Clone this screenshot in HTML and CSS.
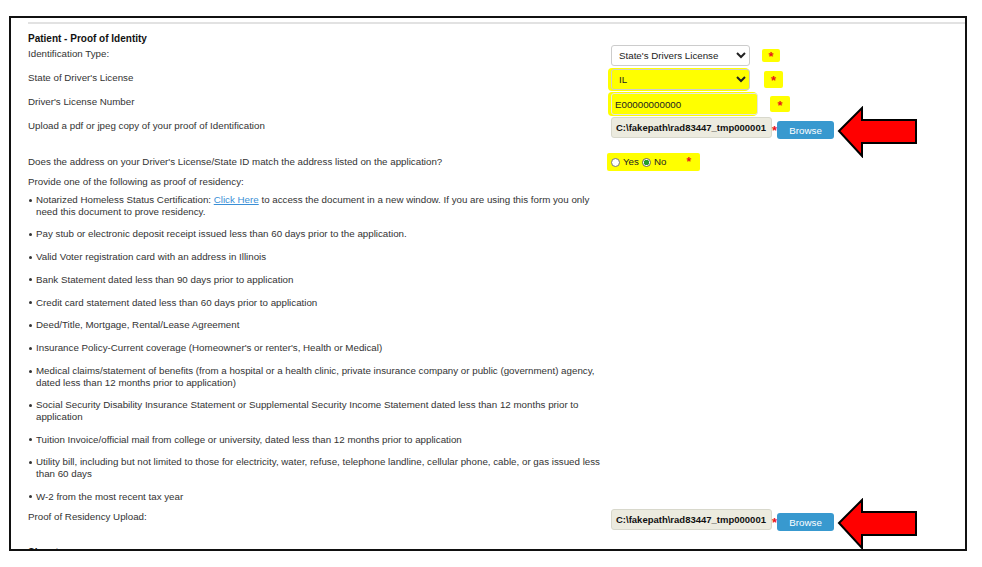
FILE: index.html
```html
<!DOCTYPE html>
<html lang="en">
<head>
    <meta charset="UTF-8">
    <meta name="viewport" content="width=device-width, initial-scale=1.0">
    <title>Patient - Proof of Identity</title>
    <link rel="stylesheet" href="styles.css">
</head>
<body>

    <div class="frame">
        <hr class="rule">

        <div class="form">
            <h3 class="section-title">Patient - Proof of Identity</h3>

            <div class="row">
                <label class="row-label" for="idType">Identification Type:</label>
                <div class="row-field">
                    <select class="field select" id="idType">
                        <option>State's Drivers License</option>
                    </select>
                    <span class="req-mark req-1">*</span>
                </div>
            </div>

            <div class="row">
                <label class="row-label" for="idState">State of Driver's License</label>
                <div class="row-field">
                    <select class="field select marked" id="idState">
                        <option>IL</option>
                    </select>
                    <span class="req-mark req-2">*</span>
                </div>
            </div>

            <div class="row">
                <label class="row-label" for="idNumber">Driver's License Number</label>
                <div class="row-field">
                    <input type="text" class="field text-input marked" id="idNumber" value="E00000000000">
                    <span class="req-mark req-3">*</span>
                </div>
            </div>

            <div class="row">
                <label class="row-label">Upload a pdf or jpeg copy of your proof of Identification</label>
                <div class="row-field">
                    <span class="file-box">C:\fakepath\rad83447_tmp000001</span>
                    <span class="req file-req">*</span>
                    <button class="btn btn-browse">Browse</button>
                    <svg class="arrow" width="82" height="52" viewBox="0 0 82 52">
                        <polygon points="3,25 26,2 26,14 80,14 80,37 26,37 26,50" fill="#ff0000" stroke="#000" stroke-width="2"/>
                    </svg>
                </div>
            </div>

            <div class="row row-question">
                <span class="row-label">Does the address on your Driver's License/State ID match the address listed on the application?</span>
                <div class="row-field">
                    <div class="radio-group">
                        <input type="radio" class="radio" name="addrMatch" id="addrYes">
                        <label for="addrYes">Yes</label>
                        <input type="radio" class="radio" name="addrMatch" id="addrNo" checked>
                        <label for="addrNo">No</label>
                        <span class="req radio-req">*</span>
                    </div>
                </div>
            </div>

            <p class="intro">Provide one of the following as proof of residency:</p>

            <ul class="doc-list">
                <li>Notarized Homeless Status Certification: <a href="#">Click Here</a> to access the document in a new window. If you are using this form you only need this document to prove residency.</li>
                <li>Pay stub or electronic deposit receipt issued less than 60 days prior to the application.</li>
                <li>Valid Voter registration card with an address in Illinois</li>
                <li>Bank Statement dated less than 90 days prior to application</li>
                <li>Credit card statement dated less than 60 days prior to application</li>
                <li>Deed/Title, Mortgage, Rental/Lease Agreement</li>
                <li>Insurance Policy-Current coverage (Homeowner's or renter's, Health or Medical)</li>
                <li>Medical claims/statement of benefits (from a hospital or a health clinic, private insurance company or public (government) agency, dated less than 12 months prior to application)</li>
                <li>Social Security Disability Insurance Statement or Supplemental Security Income Statement dated less than 12 months prior to application</li>
                <li>Tuition Invoice/official mail from college or university, dated less than 12 months prior to application</li>
                <li>Utility bill, including but not limited to those for electricity, water, refuse, telephone landline, cellular phone, cable, or gas issued less than 60 days</li>
                <li>W-2 from the most recent tax year</li>
            </ul>

            <div class="row row-upload">
                <label class="row-label">Proof of Residency Upload:</label>
                <div class="row-field">
                    <span class="file-box">C:\fakepath\rad83447_tmp000001</span>
                    <span class="req file-req">*</span>
                    <button class="btn btn-browse">Browse</button>
                    <svg class="arrow" width="82" height="52" viewBox="0 0 82 52">
                        <polygon points="3,25 26,2 26,14 80,14 80,37 26,37 26,50" fill="#ff0000" stroke="#000" stroke-width="2"/>
                    </svg>
                </div>
            </div>

            <h3 class="section-title next-title">Signature</h3>
        </div>
    </div>

</body>
</html>
```

FILE: styles.css
```css
body {
    font-family: "Liberation Sans", Arial, sans-serif;
    font-size: 9.75px;
    color: #333;
    margin: 0;
    padding: 0;
    background-color: #fff;
}

.frame {
    width: 958px;
    height: 535px;
    margin: 16px 0 0 9px;
    border: 2px solid #111;
    box-sizing: border-box;
    overflow: hidden;
}

.rule {
    margin: 4px 0 0 17px;
    height: 0;
    border: 0;
    border-top: 2px solid #e2e2e2;
}

.form {
    padding-left: 17px;
}

.section-title {
    margin: 9px 0 0;
    font-size: 10px;
    line-height: 12px;
    color: #111;
}

/* Label / field rows */
.row {
    display: flex;
    height: 24px;
}

.row-label {
    width: 583px;
    flex: none;
    padding-top: 3px;
    line-height: 12px;
}

.row-field {
    display: flex;
    align-items: flex-start;
    position: relative;
}

.field {
    font-family: inherit;
    font-size: 9.75px;
    color: #222;
    box-sizing: border-box;
    border: 1px solid #ccc;
    border-radius: 3px;
    background-color: #fff;
}

.select {
    width: 139px;
    height: 21px;
    padding: 0 3px;
}

.text-input {
    width: 147px;
    height: 22px;
    padding: 0 3px;
    border-color: #e4e4e4;
}

/* highlighter marks */
.marked {
    background-color: #ffff00;
    box-shadow: -2px 0 0 1px #ffff00;
}

.req-mark {
    background-color: #ffff00;
    color: #e8141b;
    font-size: 13px;
    font-weight: bold;
    text-align: center;
    line-height: 17px;
    border-radius: 2px;
}

.req-1 {
    width: 18px;
    height: 13px;
    margin: 4px 0 0 12px;
    line-height: 15px;
}

.req-2 {
    width: 19px;
    height: 17px;
    margin: 2px 0 0 14px;
    line-height: 19px;
}

.req-3 {
    width: 20px;
    height: 16px;
    margin: 3px 0 0 12px;
    line-height: 19px;
}

.req {
    color: #e8141b;
    font-size: 13px;
    font-weight: bold;
    line-height: 17px;
}

.file-req {
    margin-top: 5px;
}

/* file upload */
.file-box {
    width: 161px;
    height: 21px;
    box-sizing: border-box;
    padding: 0 0 0 4px;
    border: 1px solid #d8d8cc;
    border-radius: 3px;
    background-color: #ecebdf;
    color: #111;
    font-size: 9.5px;
    font-weight: bold;
    line-height: 19px;
    white-space: nowrap;
    overflow: hidden;
}

.btn {
    font-family: inherit;
    font-size: 9.75px;
    border: none;
    cursor: pointer;
    border-radius: 3px;
    color: #fff;
}

.btn-browse {
    width: 57px;
    height: 18px;
    margin: 4px 0 0 0;
    padding: 0;
    background-color: #3899cf;
}

.arrow {
    position: absolute;
    left: 225px;
    top: -11px;
}

/* yes / no question */
.row-question {
    height: auto;
    margin-top: 15px;
}

.row-question .row-label {
    padding-top: 0;
}

.radio-group {
    display: flex;
    align-items: center;
    width: 89px;
    height: 18px;
    margin: -3px 0 0 -4px;
    padding-left: 4px;
    background-color: #ffff00;
    border-radius: 2px;
    color: #222;
}

.radio {
    appearance: none;
    width: 9px;
    height: 9px;
    margin: 0 3px 0 0;
    border: 1px solid #777;
    border-radius: 50%;
    background-color: #fff;
    box-sizing: border-box;
}

.radio:checked {
    border-color: #666;
    background: radial-gradient(circle, #2a9d2a 0 2.5px, #fff 3px);
}

.radio-group label {
    margin-right: 3px;
    line-height: 12px;
}

.radio-req {
    margin-left: 17px;
    font-size: 12px;
}

.intro {
    margin: 5px 0 6px;
    line-height: 12px;
}

/* accepted documents */
.doc-list {
    width: 569px;
    margin: 0;
    padding: 0 0 0 8px;
    list-style: none;
}

.doc-list li {
    position: relative;
    line-height: 11.5px;
    margin-bottom: 11.3px;
}

.doc-list li::before {
    content: "";
    position: absolute;
    left: -7px;
    top: 4.5px;
    width: 3px;
    height: 3px;
    border-radius: 50%;
    background-color: #333;
}

.doc-list li:last-child {
    margin-bottom: 7px;
}

.doc-list a {
    color: #3a8fd6;
}

.row-upload .row-label {
    padding-top: 2px;
}

.next-title {
    margin-top: 14px;
}
```
